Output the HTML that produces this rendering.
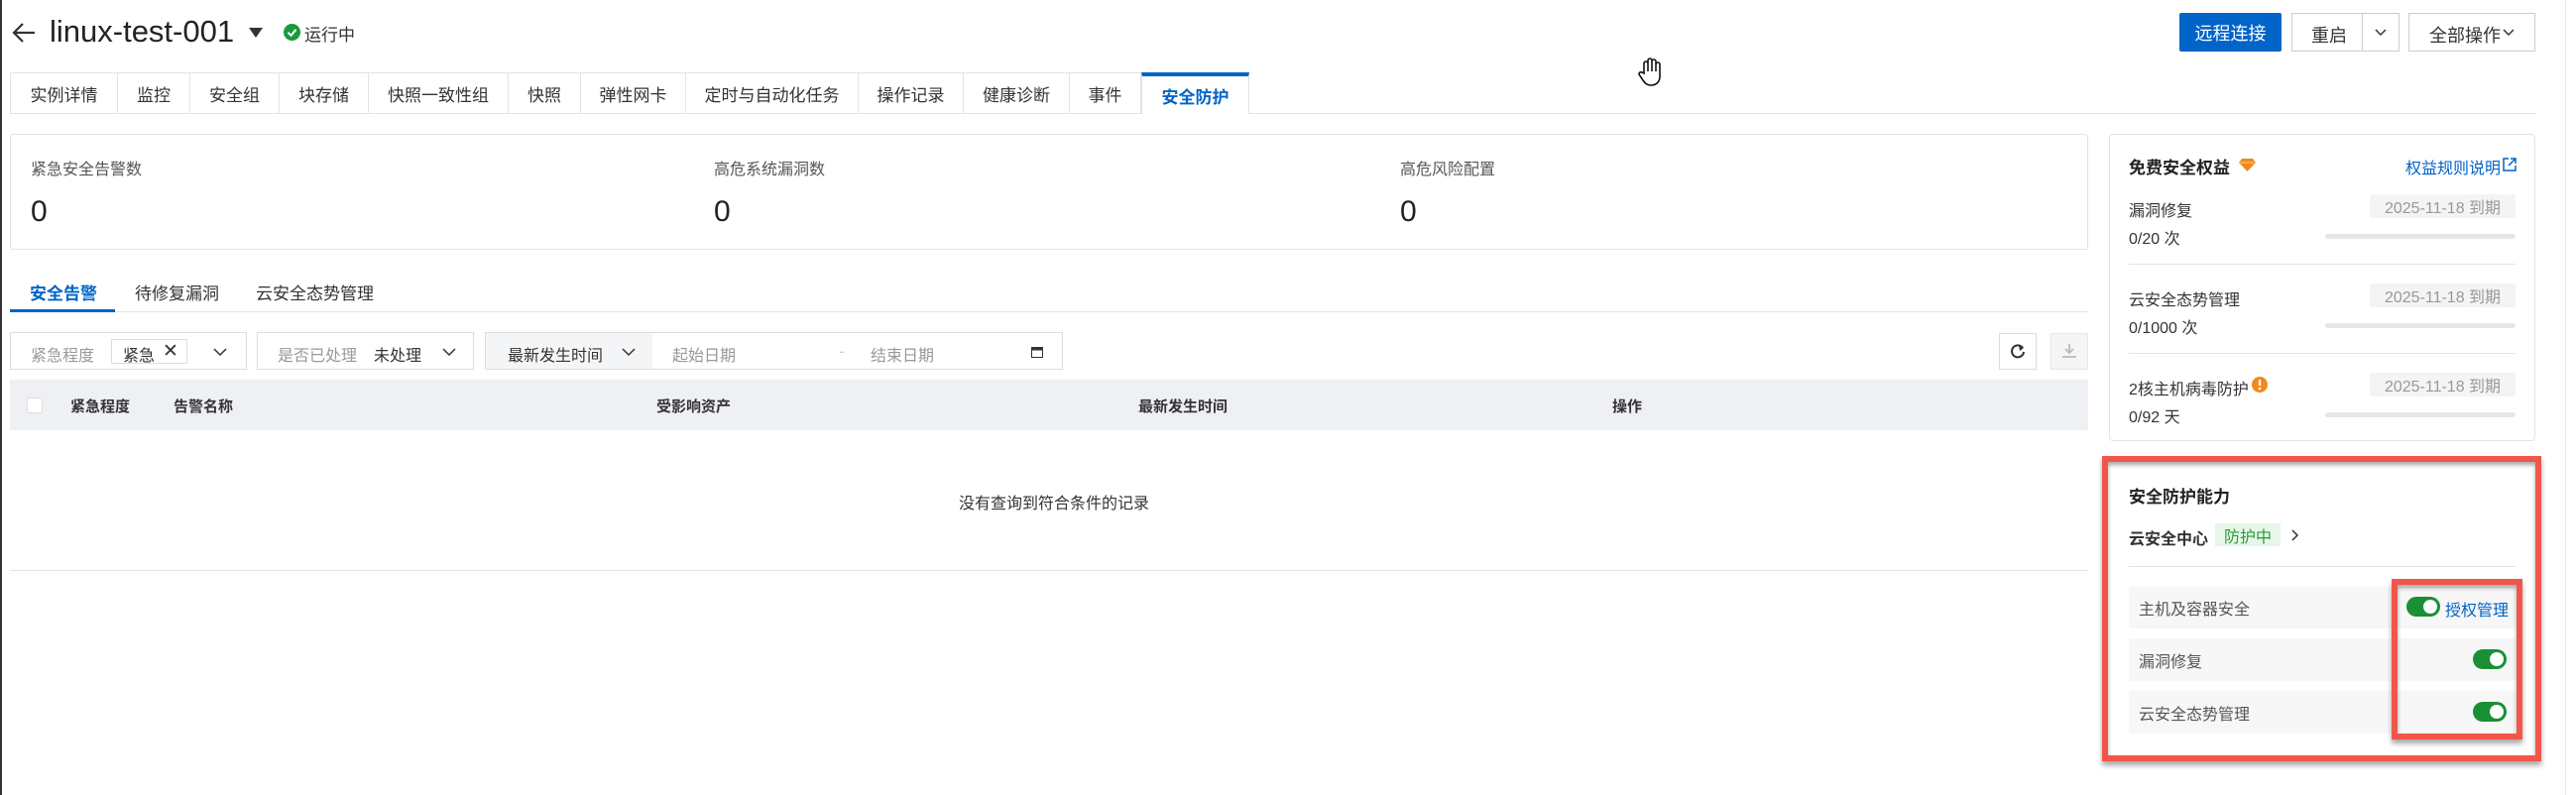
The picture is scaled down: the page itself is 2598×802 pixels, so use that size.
<!DOCTYPE html>
<html><head><meta charset="utf-8"><style>
*{box-sizing:border-box;margin:0;padding:0}
body{width:2598px;height:802px;background:#fff;position:relative;overflow:hidden;font-family:"Liberation Sans","Noto Sans CJK SC",sans-serif;color:#333;font-size:17px}
.a{position:absolute;white-space:nowrap}
.tab{position:absolute;top:73px;height:42px;border:1px solid #e3e3e3;border-right:none;background:#fff;font-size:17px;color:#333;display:flex;align-items:center;justify-content:center}
.box{position:absolute;border:1px solid #ddd;background:#fff}
.tag{position:absolute;background:#f4f4f4;color:#999;font-size:16px;display:flex;align-items:center;justify-content:center;border-radius:2px}
.bar{position:absolute;height:5px;background:#e6e6e6;border-radius:3px}
.tg{position:absolute;width:34px;height:20px;border-radius:10px;background:#1a8f35}
.tg:after{content:"";position:absolute;right:3px;top:3px;width:14px;height:14px;border-radius:50%;background:#fff}
.row{position:absolute;left:2147px;width:390px;background:#f7f7f7;font-size:16px;color:#555;padding-left:10px;display:flex;align-items:center}
.r{font-size:16px}
</style></head><body>
<div class="a" style="left:0;top:0;width:2px;height:802px;background:#333"></div>
<div class="a" style="left:2587px;top:0;width:1px;height:802px;background:#e8e8e8"></div>
<svg class="a" style="left:11px;top:21px" width="26" height="24" viewBox="0 0 26 24"><path d="M24 12H3M12 3L3 12l9 9" fill="none" stroke="#333" stroke-width="2.2"/></svg>
<div class="a" style="left:50px;top:14px;font-size:31px;color:#222">linux-test-001</div>
<svg class="a" style="left:251px;top:28px" width="14" height="10"><path d="M0 0h14L7 10z" fill="#333"/></svg>
<svg class="a" style="left:286px;top:24px" width="17" height="17"><circle cx="8.5" cy="8.5" r="8.5" fill="#1a9a3a"/><path d="M4.5 8.8l3 3 5-6" fill="none" stroke="#fff" stroke-width="2"/></svg>
<div class="a" style="left:307px;top:21px;font-size:17px;color:#333">运行中</div>
<div class="a" style="left:2198px;top:13px;width:103px;height:39px;background:#0064c8;border-radius:2px;color:#fff;font-size:18px;display:flex;align-items:center;justify-content:center">远程连接</div>
<div class="box" style="left:2311px;top:13px;width:109px;height:39px;border-color:#ccc"></div>
<div class="a" style="left:2382px;top:13px;width:1px;height:39px;background:#ccc"></div>
<div class="a" style="left:2331px;top:22px;font-size:18px">重启</div>
<svg class="a" style="left:2395px;top:29px" width="12" height="8"><path d="M1 1l5 5 5-5" fill="none" stroke="#333" stroke-width="1.5"/></svg>
<div class="box" style="left:2429px;top:13px;width:128px;height:39px;border-color:#ccc"></div>
<div class="a" style="left:2450px;top:22px;font-size:18px">全部操作</div>
<svg class="a" style="left:2524px;top:29px" width="12" height="8"><path d="M1 1l5 5 5-5" fill="none" stroke="#333" stroke-width="1.5"/></svg>
<svg class="a" style="left:1652px;top:58px" width="26" height="30" viewBox="0 0 26 30"><path d="M6 16V6a2 2 0 014 0v8V3a2 2 0 014 0v11V4a2 2 0 014 0v10V7a2 2 0 014 0v12c0 6-4 9-9 9-4 0-6-2-8-5l-4-6a2 2 0 013-2z" fill="#fff" stroke="#111" stroke-width="1.6"/></svg>
<div class="tab" style="left:10px;width:108px">实例详情</div>
<div class="tab" style="left:118px;width:73px">监控</div>
<div class="tab" style="left:191px;width:90px">安全组</div>
<div class="tab" style="left:281px;width:90px">块存储</div>
<div class="tab" style="left:371px;width:141px">快照一致性组</div>
<div class="tab" style="left:512px;width:73px">快照</div>
<div class="tab" style="left:585px;width:106px">弹性网卡</div>
<div class="tab" style="left:691px;width:174px">定时与自动化任务</div>
<div class="tab" style="left:865px;width:106px">操作记录</div>
<div class="tab" style="left:971px;width:107px">健康诊断</div>
<div class="tab" style="left:1078px;width:73px;border-right:1px solid #e3e3e3">事件</div>
<div class="tab" style="left:1151px;width:109px;border:none;border-top:4px solid #0064c8;border-left:1px solid #e3e3e3;border-right:1px solid #e3e3e3;color:#0064c8;font-weight:bold">安全防护</div>
<div class="a" style="left:1260px;top:114px;width:1297px;height:1px;background:#e3e3e3"></div>
<div class="a" style="left:10px;top:114px;width:1141px;height:1px;background:#e3e3e3"></div>
<div class="box" style="left:10px;top:135px;width:2096px;height:117px;border-color:#e3e3e3;border-radius:3px"></div>
<div class="a" style="left:31px;top:157px;color:#555;font-size:16px">紧急安全告警数</div>
<div class="a" style="left:720px;top:157px;color:#555;font-size:16px">高危系统漏洞数</div>
<div class="a" style="left:1412px;top:157px;color:#555;font-size:16px">高危风险配置</div>
<div class="a" style="left:31px;top:197px;font-size:30px;color:#222">0</div>
<div class="a" style="left:720px;top:197px;font-size:30px;color:#222">0</div>
<div class="a" style="left:1412px;top:197px;font-size:30px;color:#222">0</div>
<div class="a" style="left:30px;top:282px;color:#0064c8;font-weight:bold">安全告警</div>
<div class="a" style="left:136px;top:282px">待修复漏洞</div>
<div class="a" style="left:258px;top:282px">云安全态势管理</div>
<div class="a" style="left:10px;top:314px;width:2096px;height:1px;background:#e3e3e3"></div>
<div class="a" style="left:10px;top:312px;width:106px;height:3px;background:#0064c8"></div>
<div class="box" style="left:10px;top:335px;width:239px;height:38px"></div>
<div class="a" style="left:31px;top:345px;color:#999;font-size:16px">紧急程度</div>
<div class="box" style="left:112px;top:342px;width:77px;height:25px;border-color:#ddd"></div>
<div class="a" style="left:124px;top:345px;color:#333;font-size:16px">紧急</div>
<div class="a" style="left:164px;top:343px;font-size:19px">✕</div>
<svg class="a" style="left:215px;top:351px" width="14" height="9"><path d="M1 1l6 6 6-6" fill="none" stroke="#333" stroke-width="1.5"/></svg>
<div class="box" style="left:259px;top:335px;width:219px;height:38px"></div>
<div class="a" style="left:280px;top:345px;color:#999;font-size:16px">是否已处理</div>
<div class="a" style="left:377px;top:345px;font-size:16px">未处理</div>
<svg class="a" style="left:446px;top:351px" width="14" height="9"><path d="M1 1l6 6 6-6" fill="none" stroke="#333" stroke-width="1.5"/></svg>
<div class="box" style="left:489px;top:335px;width:583px;height:38px"></div>
<div class="a" style="left:490px;top:336px;width:168px;height:36px;background:#f4f5f7"></div>
<div class="a" style="left:512px;top:345px;font-size:16px">最新发生时间</div>
<svg class="a" style="left:627px;top:351px" width="14" height="9"><path d="M1 1l6 6 6-6" fill="none" stroke="#333" stroke-width="1.5"/></svg>
<div class="a" style="left:678px;top:345px;color:#999;font-size:16px">起始日期</div>
<div class="a" style="left:846px;top:345px;color:#ccc">-</div>
<div class="a" style="left:878px;top:345px;color:#999;font-size:16px">结束日期</div>
<svg class="a" style="left:1040px;top:349px" width="12" height="12"><rect x="0.5" y="1.5" width="11" height="10" fill="none" stroke="#333"/><rect x="0.5" y="1.5" width="11" height="3" fill="#333"/></svg>
<div class="box" style="left:2016px;top:336px;width:38px;height:37px"></div>
<svg class="a" style="left:2027px;top:346px" width="17" height="17" viewBox="0 0 17 17"><path d="M13 5A6 6 0 1 0 14 9" fill="none" stroke="#333" stroke-width="2"/><path d="M9 2l5 3-4 3z" fill="#333"/></svg>
<div class="box" style="left:2068px;top:336px;width:38px;height:37px;background:#f5f5f5;border-color:#e6e6e6"></div>
<svg class="a" style="left:2078px;top:345px" width="18" height="18"><path d="M9 2v9M5 7l4 4 4-4M2 15h14" fill="none" stroke="#bbb" stroke-width="1.8"/></svg>
<div class="a" style="left:10px;top:383px;width:2096px;height:51px;background:#eef0f4"></div>
<div class="a" style="left:27px;top:401px;width:16px;height:16px;background:#fff;border:1px solid #ddd;border-radius:2px"></div>
<div class="a" style="left:71px;top:399px;font-weight:bold;color:#333;font-size:15px">紧急程度</div>
<div class="a" style="left:175px;top:399px;font-weight:bold;color:#333;font-size:15px">告警名称</div>
<div class="a" style="left:662px;top:399px;font-weight:bold;color:#333;font-size:15px">受影响资产</div>
<div class="a" style="left:1148px;top:399px;font-weight:bold;color:#333;font-size:15px">最新发生时间</div>
<div class="a" style="left:1626px;top:399px;font-weight:bold;color:#333;font-size:15px">操作</div>
<div class="a" style="left:967px;top:494px;font-size:16px">没有查询到符合条件的记录</div>
<div class="a" style="left:10px;top:575px;width:2096px;height:1px;background:#e3e3e3"></div>
<div class="box" style="left:2127px;top:135px;width:430px;height:310px;border-color:#e3e3e3;border-radius:4px"></div>
<div class="a" style="left:2147px;top:155px;font-size:17px;font-weight:bold;color:#222">免费安全权益</div>
<svg class="a" style="left:2258px;top:160px" width="17" height="13"><path d="M3 0h11l3 4-8.5 9L0 4z" fill="#f08a1c"/><path d="M0 4h17" stroke="#fbb35a" stroke-width="1.5"/></svg>
<div class="a" style="left:2426px;top:156px;font-size:16px;color:#0064c8">权益规则说明</div>
<svg class="a" style="left:2524px;top:159px" width="14" height="14"><path d="M6 1H1v12h12V8M8 1h5v5M13 1L6 8" fill="none" stroke="#0064c8" stroke-width="1.5"/></svg>
<div class="a r" style="left:2147px;top:199px">漏洞修复</div>
<div class="a r" style="left:2147px;top:227px">0/20 次</div>
<div class="tag" style="left:2390px;top:196px;width:147px;height:24px">2025-11-18 到期</div>
<div class="bar" style="left:2345px;top:236px;width:192px"></div>
<div class="a" style="left:2147px;top:266px;width:390px;height:1px;background:#e3e3e3"></div>
<div class="a r" style="left:2147px;top:289px">云安全态势管理</div>
<div class="a r" style="left:2147px;top:317px">0/1000 次</div>
<div class="tag" style="left:2390px;top:286px;width:147px;height:24px">2025-11-18 到期</div>
<div class="bar" style="left:2345px;top:326px;width:192px"></div>
<div class="a" style="left:2147px;top:356px;width:390px;height:1px;background:#e3e3e3"></div>
<div class="a r" style="left:2147px;top:379px">2核主机病毒防护</div>
<svg class="a" style="left:2271px;top:380px" width="16" height="16"><circle cx="8" cy="8" r="8" fill="#f08a1c"/><path d="M8 3v6" stroke="#fff" stroke-width="2.2"/><circle cx="8" cy="12" r="1.3" fill="#fff"/></svg>
<div class="a r" style="left:2147px;top:407px">0/92 天</div>
<div class="tag" style="left:2390px;top:376px;width:147px;height:24px">2025-11-18 到期</div>
<div class="bar" style="left:2345px;top:416px;width:192px"></div>
<div class="a" style="left:2120px;top:460px;width:443px;height:308px;border:6px solid #f0574a;box-shadow:0 4px 5px rgba(0,0,0,0.35), inset 0 3px 4px rgba(0,0,0,0.35)"></div>
<div class="a" style="left:2147px;top:487px;font-size:17px;font-weight:bold;color:#222">安全防护能力</div>
<div class="a" style="left:2147px;top:530px;font-weight:bold;color:#333;font-size:16px">云安全中心</div>
<div class="a" style="left:2234px;top:528px;width:66px;height:23px;background:#e6f6e8;color:#2a9d3a;font-size:16px;display:flex;align-items:center;justify-content:center">防护中</div>
<svg class="a" style="left:2311px;top:534px" width="8" height="12"><path d="M1 1l5 5-5 5" fill="none" stroke="#333" stroke-width="1.5"/></svg>
<div class="a" style="left:2147px;top:571px;width:390px;height:1px;background:#e3e3e3"></div>
<div class="row" style="top:592px;height:42px">主机及容器安全</div>
<div class="row" style="top:644px;height:43px">漏洞修复</div>
<div class="row" style="top:697px;height:43px">云安全态势管理</div>
<div class="tg" style="left:2427px;top:602px"></div>
<div class="a" style="left:2466px;top:602px;color:#0064c8;font-size:16px">授权管理</div>
<div class="tg" style="left:2494px;top:655px"></div>
<div class="tg" style="left:2494px;top:708px"></div>
<div class="a" style="left:2412px;top:584px;width:132px;height:162px;border:6px solid #f0574a;box-shadow:0 4px 5px rgba(0,0,0,0.35), inset 0 3px 4px rgba(0,0,0,0.35)"></div>
</body></html>
